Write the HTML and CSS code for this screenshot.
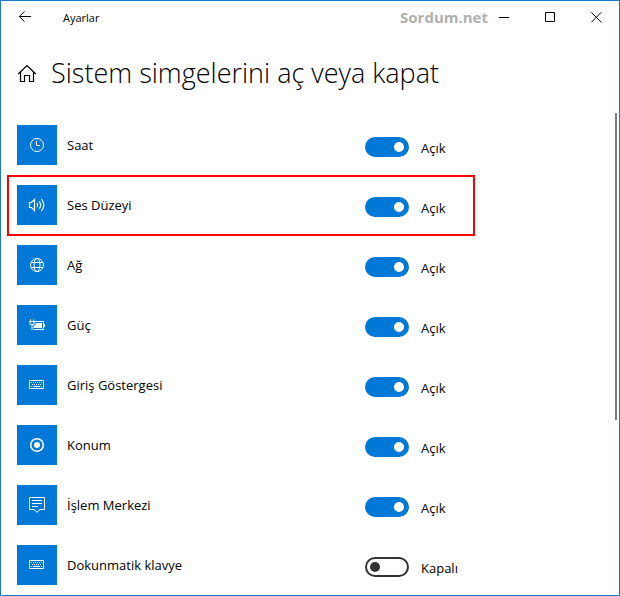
FILE: index.html
```html
<!DOCTYPE html>
<html lang="tr">
<head>
<meta charset="utf-8">
<meta name="viewport" content="width=device-width, initial-scale=1">
<title>Ayarlar</title>
<link rel="stylesheet" href="styles.css">
</head>
<body>
<div class="window">
  <header class="titlebar">
    <button class="back" type="button" aria-label="Geri">
      <svg width="14" height="12" viewBox="0 0 14 12"><path d="M13 5.500H1.500M6.500 .3L1.300 5.500l5.200 5.200"/></svg>
    </button>
    <span class="app-name">Ayarlar</span>
    <span class="brand">Sordum.net</span>
    <div class="controls">
      <button type="button" aria-label="Simge durumuna küçült"><svg width="11" height="11" viewBox="0 0 11 11"><path d="M0 5.500h10"/></svg></button>
      <button type="button" aria-label="Ekranı kapla"><svg width="11" height="11" viewBox="0 0 11 11"><path d="M.5 .5h9v9h-9z"/></svg></button>
      <button type="button" aria-label="Kapat"><svg width="11" height="11" viewBox="0 0 11 11"><path d="M.3 .3l10 10M10.300 .3l-10 10"/></svg></button>
    </div>
  </header>

  <div class="heading">
    <svg class="home" width="20" height="20" viewBox="0 0 20 20"><path d="M1.200 11L10 2.500l8.800 8.500M3.500 9v9.500h4v-6h5v6h4V9"/></svg>
    <h1>Sistem simgelerini aç veya kapat</h1>
  </div>

  <main class="list">
    <div class="row">
      <span class="tile"><svg width="20" height="20" viewBox="0 0 20 20"><circle cx="10" cy="10" r="6.500"/><path d="M9.500 6v4.500H13"/></svg></span>
      <label class="name" for="saat">Saat</label>
      <input class="switch" type="checkbox" id="saat" checked>
      <span class="state">Açık</span>
    </div>
    <div class="row marked">
      <span class="tile"><svg class="speaker" width="20" height="20" viewBox="0 0 20 20"><path d="M2.500 7.500h2l3-3v11l-3-3h-2zM10 8q1.500 2 0 4M12.200 6.300q3 3.700 0 7.400M14.400 4q4.800 6 0 12"/></svg></span>
      <label class="name" for="ses">Ses Düzeyi</label>
      <input class="switch" type="checkbox" id="ses" checked>
      <span class="state">Açık</span>
    </div>
    <div class="row">
      <span class="tile"><svg width="20" height="20" viewBox="0 0 20 20"><circle cx="10" cy="10" r="6.500"/><ellipse cx="10" cy="10" rx="3" ry="6.500"/><path d="M4.500 7.500h11M4.500 12.500h11"/></svg></span>
      <label class="name" for="ag">Ağ</label>
      <input class="switch" type="checkbox" id="ag" checked>
      <span class="state">Açık</span>
    </div>
    <div class="row">
      <span class="tile"><svg width="20" height="20" viewBox="0 0 20 20"><path d="M3.500 4v2M6.500 4v2M2 6.500h6M3 7v2.500h4V7M5 10v5M8 6.500h8.500v8H6.500M17.500 9v3"/><path class="solid" d="M8.500 8H15v5H6.500v-2l2-1z"/></svg></span>
      <label class="name" for="guc">Güç</label>
      <input class="switch" type="checkbox" id="guc" checked>
      <span class="state">Açık</span>
    </div>
    <div class="row">
      <span class="tile"><svg width="20" height="20" viewBox="0 0 20 20"><path d="M2.500 5.500h14v8h-14z"/><path class="keys" d="M4 7.500h11.500M5 9.500h10"/><path d="M4 11.500h1M6 11.500h7M14 11.500h1"/></svg></span>
      <label class="name" for="giris">Giriş Göstergesi</label>
      <input class="switch" type="checkbox" id="giris" checked>
      <span class="state">Açık</span>
    </div>
    <div class="row">
      <span class="tile"><svg width="20" height="20" viewBox="0 0 20 20"><circle class="ring" cx="10" cy="10" r="6.300"/><circle class="solid" cx="10" cy="10" r="3"/></svg></span>
      <label class="name" for="konum">Konum</label>
      <input class="switch" type="checkbox" id="konum" checked>
      <span class="state">Açık</span>
    </div>
    <div class="row">
      <span class="tile"><svg width="20" height="20" viewBox="0 0 20 20"><path d="M2.500 2.500h15v12H13l-3 2.800-3-2.800H2.500zM5 5.500h10M5 8.500h10M5 11.500h6"/></svg></span>
      <label class="name" for="islem">İşlem Merkezi</label>
      <input class="switch" type="checkbox" id="islem" checked>
      <span class="state">Açık</span>
    </div>
    <div class="row">
      <span class="tile"><svg width="20" height="20" viewBox="0 0 20 20"><path d="M2.500 5.500h14v8h-14z"/><path class="keys" d="M4 7.500h11.500M5 9.500h10"/><path d="M4 11.500h1M6 11.500h7M14 11.500h1"/></svg></span>
      <label class="name" for="klavye">Dokunmatik klavye</label>
      <input class="switch" type="checkbox" id="klavye">
      <span class="state">Kapalı</span>
    </div>
  </main>
  <div class="scroll-thumb"></div>
</div>
</body>
</html>
```

FILE: styles.css
```css
* {
  box-sizing: border-box;
}

body {
  margin: 0;
  background: #fff;
  color: #000;
  font-family: "Open Sans", "Noto Sans", sans-serif;
  font-size: 13px;
  line-height: 20px;
}

svg {
  display: block;
  fill: none;
  stroke: #000;
}

button {
  display: flex;
  align-items: center;
  justify-content: center;
  padding: 0;
  border: 0;
  background: none;
}

.window {
  position: relative;
  min-height: 100vh;
  border: 1px solid #1979ca;
}

.titlebar {
  display: flex;
  align-items: center;
  height: 32px;
  padding-right: 8px;
}

.back {
  width: 48px;
  height: 32px;
}

.app-name {
  flex: 1;
  padding: 2px 0 0 14px;
  font-size: 11px;
}

.brand {
  padding-right: 1px;
  color: #b0b0b0;
  font-size: 15px;
  font-weight: 700;
}

.controls {
  display: flex;
  gap: 16px;
}

.controls button {
  width: 30px;
  height: 32px;
}

.heading {
  display: flex;
  align-items: center;
  gap: 14px;
  height: 82px;
  padding: 0 0 2px 16px;
}

.heading svg {
  stroke-width: 1.2;
}

h1 {
  margin: 0;
  font-size: 27px;
  font-weight: 300;
  line-height: 36px;
}

.list {
  padding-left: 6px;
}

.row {
  position: relative;
  display: grid;
  grid-template-columns: 40px 1fr 44px 54px;
  align-items: center;
  max-width: 468px;
  height: 60px;
  padding: 0 12px 0 10px;
}

.marked::after {
  content: "";
  position: absolute;
  inset: 0 0 -1px;
  border: 2px solid #ff0000;
  pointer-events: none;
}

.tile {
  display: grid;
  place-items: center;
  height: 40px;
  background: #0078d7;
}

.tile svg {
  stroke: #fff;
}

.tile .speaker {
  stroke-width: 1.2;
}

.tile .solid {
  fill: #fff;
  stroke: none;
}

.tile .ring {
  stroke-width: 1.6;
}

.tile .keys {
  stroke-dasharray: 1 1;
}

.name {
  padding-left: 10px;
}

.switch {
  appearance: none;
  display: flex;
  align-items: center;
  width: 44px;
  height: 20px;
  margin: 4px 0 0;
  padding: 0 3px;
  border: 2px solid #333;
  border-radius: 10px;
}

.switch::before {
  content: "";
  width: 10px;
  height: 10px;
  border-radius: 50%;
  background: #333;
}

.switch:checked {
  justify-content: flex-end;
  border-color: #0078d7;
  background: #0078d7;
}

.switch:checked::before {
  background: #fff;
}

.state {
  padding: 6px 0 0 12px;
}

.scroll-thumb {
  position: absolute;
  top: 112px;
  right: 2px;
  width: 2px;
  height: 307px;
  background: #7a7a7a;
}
```
